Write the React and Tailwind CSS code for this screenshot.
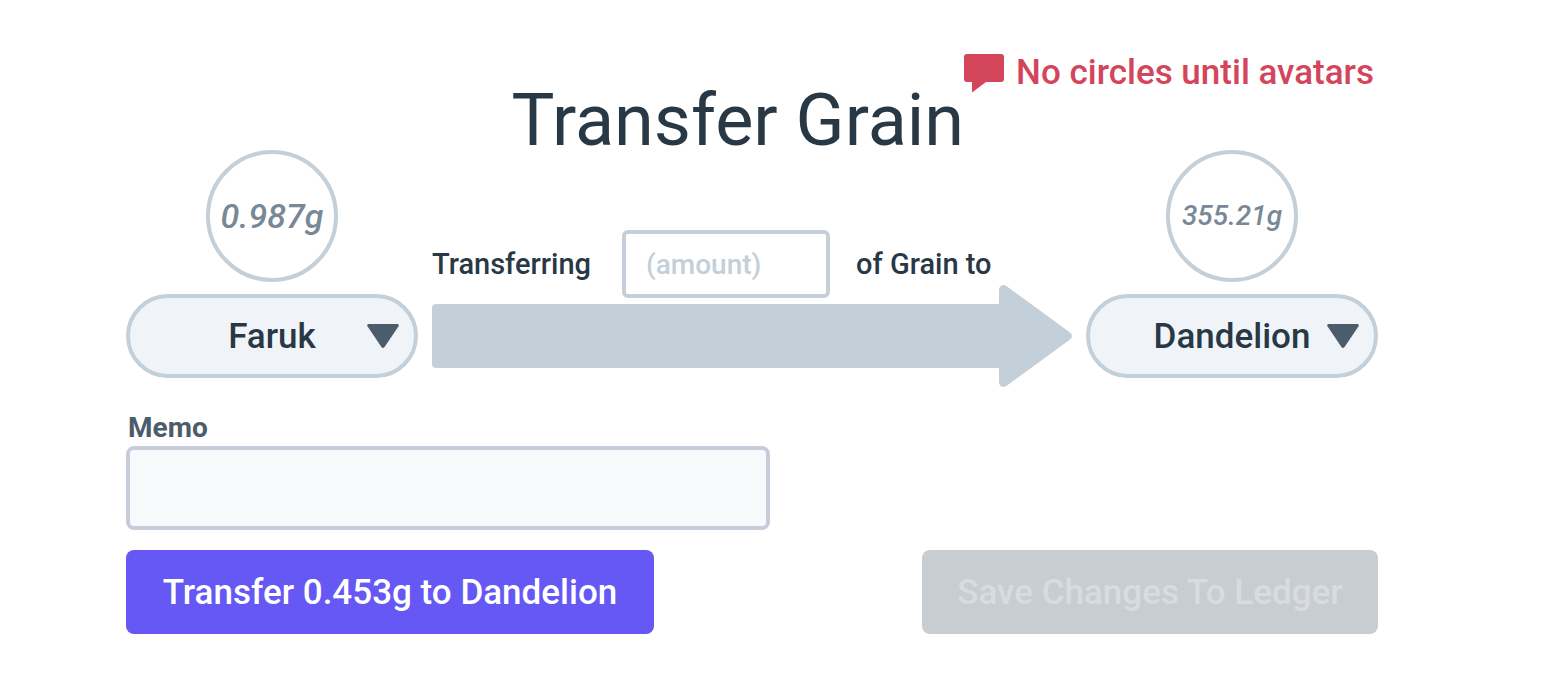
const people = ['Faruk', 'Dandelion'];

function PersonPicker({ label, name, balance, balanceClass }) {
  return (
    <div className="flex flex-col items-center gap-3">
      <div className="flex size-[132px] items-center justify-center rounded-full border-4 border-[#c3cfd9]">
        <span className={balanceClass}>{balance}</span>
      </div>
      <div className="relative w-full">
        <select
          aria-label={label}
          defaultValue={name}
          className="h-[84px] w-full appearance-none rounded-full border-4 border-[#c3cfd9] bg-[#f0f4f8] px-12 pt-0.5 text-[35px] font-medium text-[#293845] [text-align-last:center]"
        >
          {people.map((person) => (
            <option key={person}>{person}</option>
          ))}
        </select>
        <svg
          viewBox="0 0 32 24"
          className="pointer-events-none absolute top-[30px] right-[19px] h-6 w-8 fill-[#4b5c6b]"
          aria-hidden="true"
        >
          <path d="M1.6 0H30.4Q32.7 .4 31.4 2.6L17.4 23.2Q16 24.8 14.6 23.2L.6 2.6Q-.7 .4 1.6 0Z" />
        </svg>
      </div>
    </div>
  );
}

function Arrow() {
  return (
    <div className="-mt-[13px] flex items-center" aria-hidden="true">
      <div className="h-16 flex-1 rounded-l bg-[#c3cfd9]" />
      <svg viewBox="0 0 73 102" className="h-[102px] w-[73px] fill-[#c3cfd9]">
        <path d="M0 5Q0 1 4 0Q6 0 8 1.4L71 47.500Q75 51 71 54.500L8 100.600Q6 102 4 102Q0 101 0 97Z" />
      </svg>
    </div>
  );
}

export default function App() {
  return (
    <main className="min-h-screen bg-white pt-12 pr-[182px] pb-12 pl-[126px] font-['Roboto',sans-serif] text-[#293845]">
      <header className="flex h-[102px] justify-end pr-1">
        <h1 className="self-end pb-1 text-[72px] leading-[50px] font-normal whitespace-nowrap">Transfer Grain</h1>
        <p className="flex h-[50px] items-center gap-3 text-[35px] font-medium whitespace-nowrap text-[#d3455b]">
          <svg viewBox="0 0 40 39" className="h-[39px] w-10 fill-[#d3455b]" aria-hidden="true">
            <path d="M3 0H37Q40 0 40 3V25Q40 28 37 28H22L8 38.500V28H3Q0 28 0 25V3Q0 0 3 0Z" />
          </svg>
          No circles until avatars
        </p>
      </header>

      <form onSubmit={(event) => event.preventDefault()}>
        <div className="grid grid-cols-[292px_1fr_292px] gap-x-[14px]">
          <PersonPicker
            label="From"
            name="Faruk"
            balance="0.987g"
            balanceClass="text-[34px] font-medium italic text-[#788896]"
          />
          <div className="flex flex-col pt-20">
            <div className="flex h-[68px] items-center text-[29px]">
              <label htmlFor="amount" className="w-[190px] pt-0.5 font-medium">Transferring</label>
              <input
                id="amount"
                placeholder="(amount)"
                className="h-full w-[208px] rounded-md border-4 border-[#c5ced9] bg-white px-5 text-[28px] font-medium placeholder:text-[#c3cfd9]"
              />
              <span className="pt-0.5 pl-[26px] font-medium">of Grain to</span>
            </div>
            <Arrow />
          </div>
          <PersonPicker
            label="To"
            name="Dandelion"
            balance="355.21g"
            balanceClass="text-[28px] font-medium italic text-[#788896]"
          />
        </div>

        <label htmlFor="memo" className="mt-[25px] block pb-0.5 pl-0.5 text-[28px] leading-8 font-bold text-[#4b5c6b]">Memo</label>
        <input
          id="memo"
          className="block h-[84px] w-[644px] rounded-lg border-4 border-[#c5ced9] bg-[#f8f9fb] px-5 text-[28px]"
        />

        <div className="mt-5 flex justify-between text-[35px] font-medium">
          <button type="submit" className="h-[84px] w-[528px] rounded-lg bg-[#6558f5] pt-0.5 text-white">
            Transfer 0.453g to Dandelion
          </button>
          <button type="button" disabled className="h-[84px] w-[456px] rounded-lg bg-[#c8cdd1] pt-0.5 text-[#d8dce0]">
            Save Changes To Ledger
          </button>
        </div>
      </form>
    </main>
  );
}
